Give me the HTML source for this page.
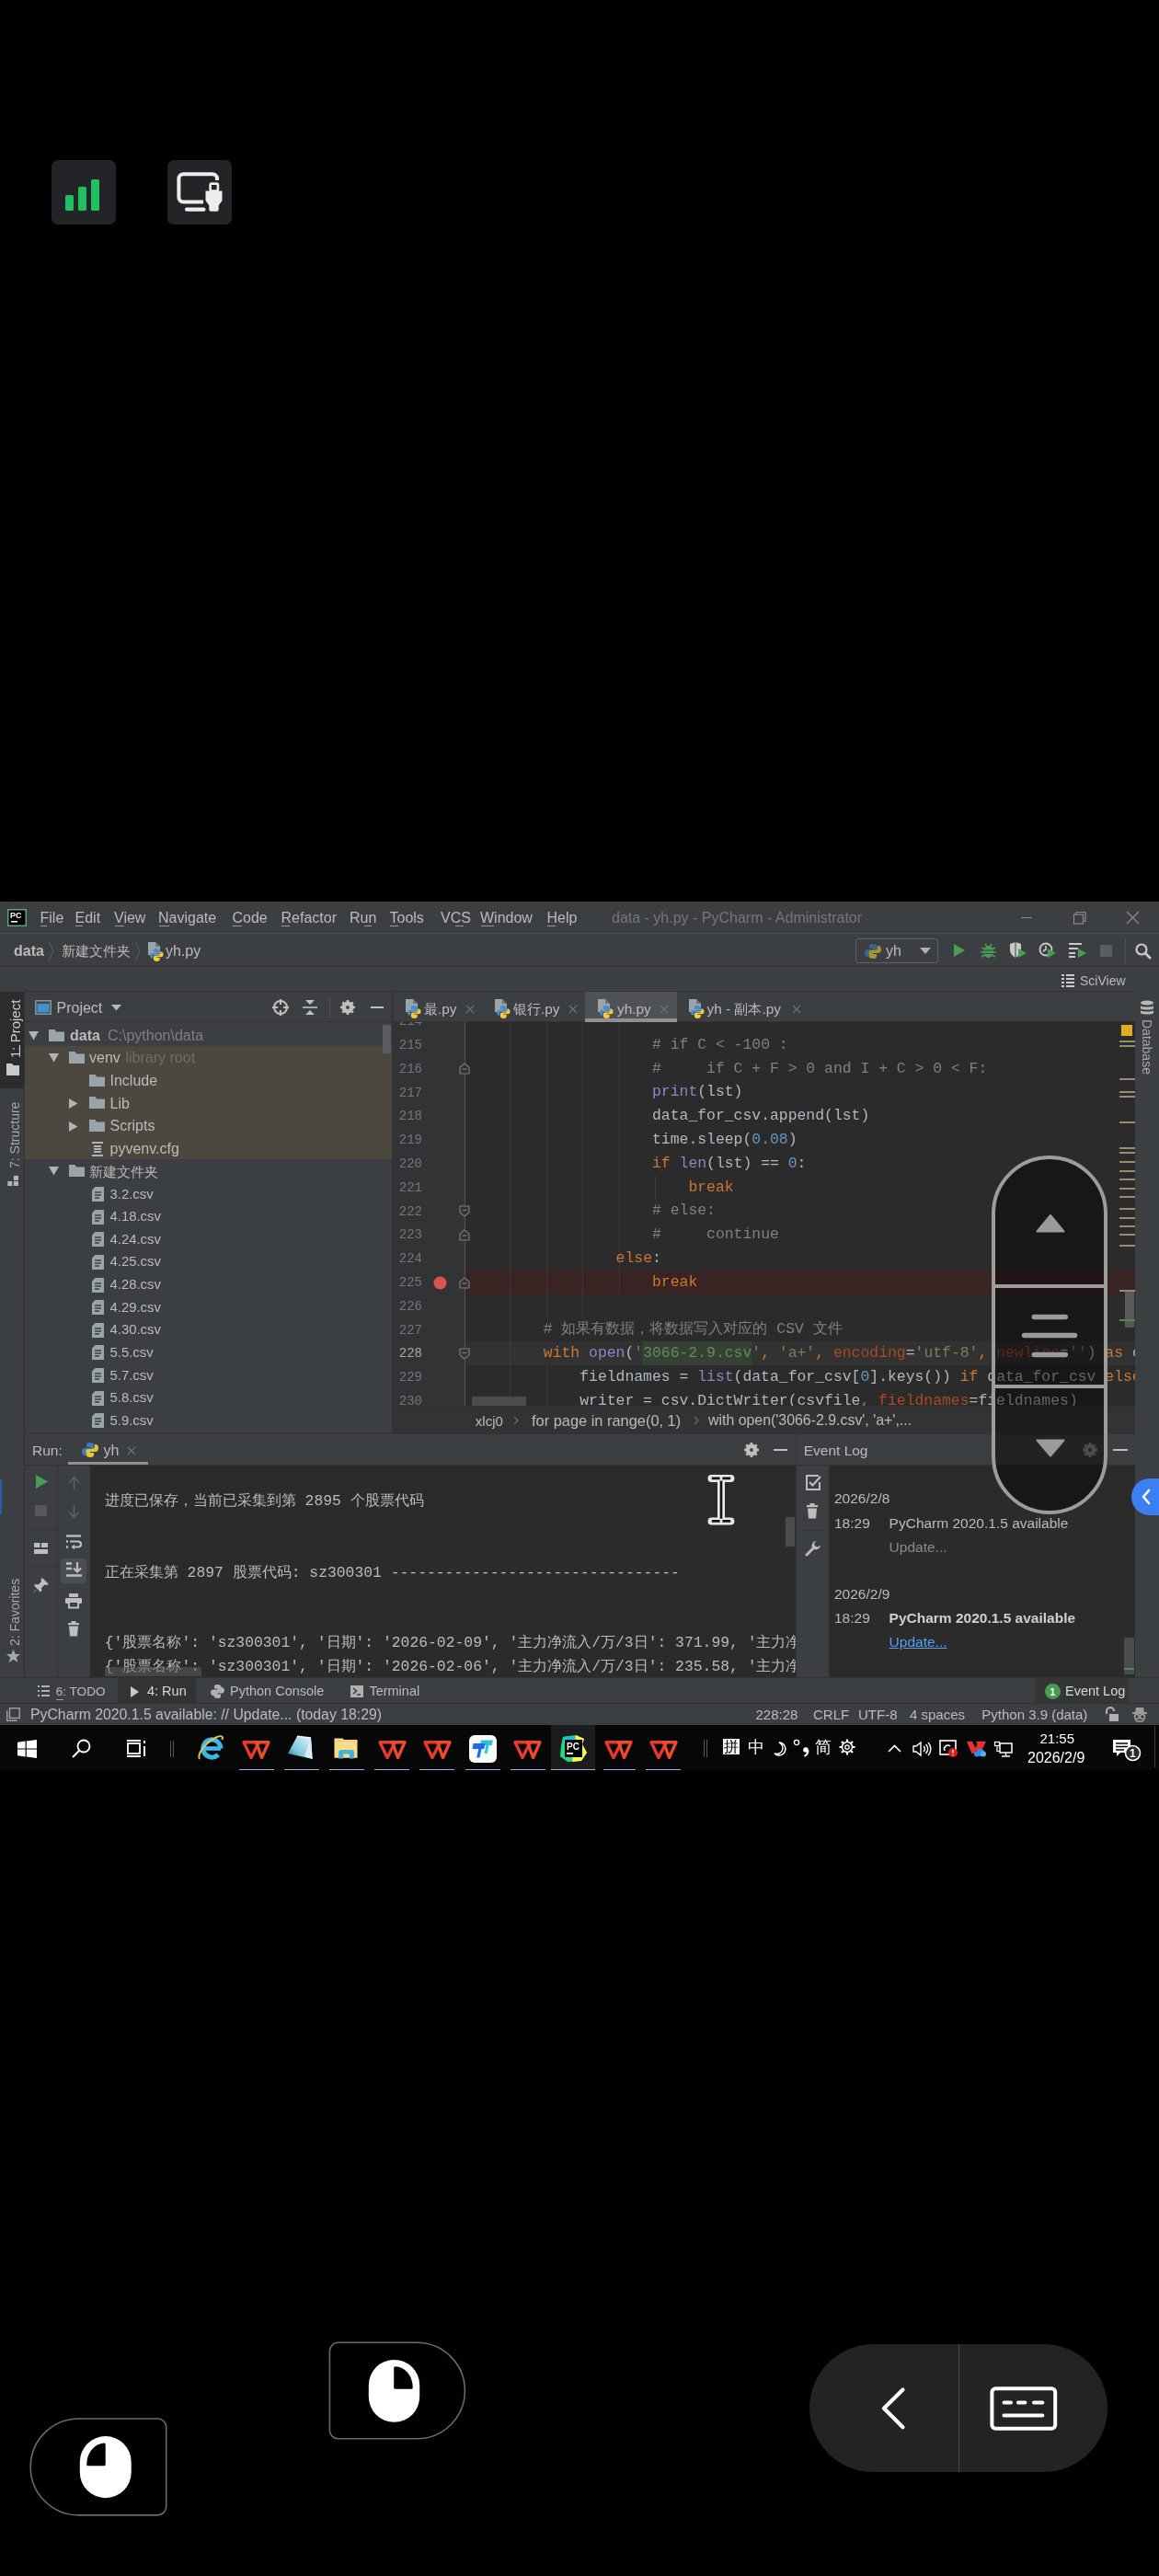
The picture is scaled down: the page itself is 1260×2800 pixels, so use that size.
<!DOCTYPE html>
<html><head><meta charset="utf-8">
<style>
*{margin:0;padding:0;box-sizing:border-box}
html,body{width:1260px;height:2800px;background:#000;overflow:hidden;font-family:"Liberation Sans",sans-serif}
.a{position:absolute}
.t{position:absolute;white-space:pre;line-height:1}
svg.a{overflow:visible}
</style></head><body>

<div class="a" style="left:56px;top:174px;width:70px;height:70px;background:#232427;border-radius:7px"></div>
<div class="a" style="left:71px;top:211.5px;width:8.5px;height:17px;background:#1fbf62;border-radius:1.5px"></div>
<div class="a" style="left:85px;top:203px;width:8.5px;height:25.5px;background:#1fbf62;border-radius:1.5px"></div>
<div class="a" style="left:99px;top:195px;width:8.5px;height:33.5px;background:#1fbf62;border-radius:1.5px"></div>
<div class="a" style="left:182px;top:174px;width:70px;height:70px;background:#232427;border-radius:7px"></div>
<svg class="a" style="left:182px;top:174px;" width="70" height="70" viewBox="0 0 70 70"><path d="M54 22 V20.2 a5 5 0 0 0 -5 -5 H17.4 a5 5 0 0 0 -5 5 V40.5 a5 5 0 0 0 5 5 H39" fill="none" stroke="#ededed" stroke-width="4"/><rect x="19" y="51.5" width="22.5" height="4.3" rx="2" fill="#ededed"/><path d="M41.5 33.6 h18 v10.5 l-3.8 5.2 v4.5 a2 2 0 0 1 -2 2 h-6.4 a2 2 0 0 1 -2 -2 v-4.5 l-3.8 -5.2 z" fill="#ededed" stroke="#232427" stroke-width="3" paint-order="stroke"/><rect x="46.6" y="25.6" width="8.3" height="8" rx="1.5" fill="#232427" stroke="#ededed" stroke-width="2.6"/></svg>
<div class="a" style="left:0;top:980px;width:1260px;height:895px;background:#3c3f41;overflow:hidden;filter:blur(0.3px)">
<div class="a" style="left:0px;top:34px;width:1260px;height:1px;background:#4b4e50;"></div>
<svg class="a" style="left:8px;top:8px;" width="21" height="19" viewBox="0 0 21 19"><rect x="0.75" y="0.75" width="19.5" height="17.5" fill="#000" stroke="#57a584" stroke-width="1.5"/><text x="3" y="10" font-family="Liberation Sans" font-weight="bold" font-size="9" fill="#fff">PC</text><rect x="4" y="13" width="7" height="1.6" fill="#fff"/></svg>
<div class="t" style="left:43.5px;top:10.0px;font-size:16px;color:#bbbbbb;font-weight:normal;font-family:'Liberation Sans',sans-serif;">File</div>
<div class="t" style="left:81.5px;top:10.0px;font-size:16px;color:#bbbbbb;font-weight:normal;font-family:'Liberation Sans',sans-serif;">Edit</div>
<div class="t" style="left:124px;top:10.0px;font-size:16px;color:#bbbbbb;font-weight:normal;font-family:'Liberation Sans',sans-serif;">View</div>
<div class="t" style="left:172px;top:10.0px;font-size:16px;color:#bbbbbb;font-weight:normal;font-family:'Liberation Sans',sans-serif;">Navigate</div>
<div class="t" style="left:252.5px;top:10.0px;font-size:16px;color:#bbbbbb;font-weight:normal;font-family:'Liberation Sans',sans-serif;">Code</div>
<div class="t" style="left:305.5px;top:10.0px;font-size:16px;color:#bbbbbb;font-weight:normal;font-family:'Liberation Sans',sans-serif;">Refactor</div>
<div class="t" style="left:380px;top:10.0px;font-size:16px;color:#bbbbbb;font-weight:normal;font-family:'Liberation Sans',sans-serif;">Run</div>
<div class="t" style="left:423.5px;top:10.0px;font-size:16px;color:#bbbbbb;font-weight:normal;font-family:'Liberation Sans',sans-serif;">Tools</div>
<div class="t" style="left:479px;top:10.0px;font-size:16px;color:#bbbbbb;font-weight:normal;font-family:'Liberation Sans',sans-serif;">VCS</div>
<div class="t" style="left:522px;top:10.0px;font-size:16px;color:#bbbbbb;font-weight:normal;font-family:'Liberation Sans',sans-serif;">Window</div>
<div class="t" style="left:594.5px;top:10.0px;font-size:16px;color:#bbbbbb;font-weight:normal;font-family:'Liberation Sans',sans-serif;">Help</div>
<div class="a" style="left:44px;top:26px;width:7px;height:1px;background:#9a9a9a;"></div>
<div class="a" style="left:82px;top:26px;width:8px;height:1px;background:#9a9a9a;"></div>
<div class="a" style="left:125px;top:26px;width:10px;height:1px;background:#9a9a9a;"></div>
<div class="a" style="left:173px;top:26px;width:11px;height:1px;background:#9a9a9a;"></div>
<div class="a" style="left:253px;top:26px;width:10px;height:1px;background:#9a9a9a;"></div>
<div class="a" style="left:306px;top:26px;width:9px;height:1px;background:#9a9a9a;"></div>
<div class="a" style="left:396px;top:26px;width:8px;height:1px;background:#9a9a9a;"></div>
<div class="a" style="left:424px;top:26px;width:9px;height:1px;background:#9a9a9a;"></div>
<div class="a" style="left:495px;top:26px;width:9px;height:1px;background:#9a9a9a;"></div>
<div class="a" style="left:523px;top:26px;width:14px;height:1px;background:#9a9a9a;"></div>
<div class="a" style="left:595px;top:26px;width:9px;height:1px;background:#9a9a9a;"></div>
<div class="t" style="left:665px;top:9.5px;font-size:16px;color:#777777;font-weight:normal;font-family:'Liberation Sans',sans-serif;">data - yh.py - PyCharm - Administrator</div>
<div class="a" style="left:1110px;top:17px;width:12px;height:1.2px;background:#8a8a8a;"></div>
<svg class="a" style="left:1166px;top:10px;" width="16" height="16" viewBox="0 0 16 16"><rect x="1.5" y="4" width="10" height="10" fill="none" stroke="#8a8a8a" stroke-width="1.2"/><path d="M4 4V1.5h10v10h-2.5" fill="none" stroke="#8a8a8a" stroke-width="1.2"/></svg>
<svg class="a" style="left:1224px;top:10px;" width="15" height="15" viewBox="0 0 15 15"><path d="M1 1L14 14M14 1L1 14" stroke="#8a8a8a" stroke-width="1.3"/></svg>
<div class="a" style="left:0px;top:70px;width:1260px;height:1px;background:#323232;"></div>
<div class="t" style="left:15px;top:45.5px;font-size:16px;color:#bbbbbb;font-weight:bold;font-family:'Liberation Sans',sans-serif;">data</div>
<svg class="a" style="left:52px;top:42px;" width="8" height="24" viewBox="0 0 8 24"><path d="M1 1L6 12L1 23" fill="none" stroke="#5a5d5f" stroke-width="1"/></svg>
<div class="t" style="left:67px;top:46.0px;font-size:15px;color:#bbbbbb;font-weight:normal;font-family:'Liberation Sans',sans-serif;">新建文件夹</div>
<svg class="a" style="left:146px;top:42px;" width="8" height="24" viewBox="0 0 8 24"><path d="M1 1L6 12L1 23" fill="none" stroke="#5a5d5f" stroke-width="1"/></svg>
<svg class="a" style="left:160px;top:44px;" width="18" height="21" viewBox="0 0 18 21"><path d="M1 0h8l5 5v9H1z" fill="#9aa4ab"/><path d="M9 0v5h5" fill="#6b7479"/><path d="M10 7c-3.2 0-3.2 1.6-3.2 2.4v1.6H10v.8H5.3C3.7 11.8 3 13 3 14.5s.7 3 2.3 3h.9v-1.7c0-1.5.8-2.3 2.3-2.3h3.1c1.2 0 2-.8 2-2V9.4C13.6 8 12.2 7 10 7z" fill="#4a8cc7"/><path d="M10.5 21c3.2 0 3.2-1.6 3.2-2.4V17h-3.2v-.8h4.7c1.6 0 2.3-1.2 2.3-2.7s-.7-3-2.3-3h-.9v1.7c0 1.5-.8 2.3-2.3 2.3H8.9c-1.2 0-2 .8-2 2v2.1C6.9 20 8.3 21 10.5 21z" fill="#f0cf3c"/></svg>
<div class="t" style="left:180px;top:45.5px;font-size:16px;color:#bbbbbb;font-weight:normal;font-family:'Liberation Sans',sans-serif;">yh.py</div>
<div class="a" style="left:930px;top:40px;width:90px;height:27px;background:#3c3f41;border:1px solid #5e6060;border-radius:3px"></div>
<svg class="a" style="left:940px;top:45px;" width="18" height="18" viewBox="0 0 18 18"><path d="M9 1c-4 0-4 2-4 3v2h4v1H3c-2 0-3 2-3 4s1 4 3 4h1v-2c0-2 1-3 3-3h4c1.5 0 2.5-1 2.5-2.5V4c0-2-2-3-4.5-3z" fill="#3d6585"/><path d="M9 17c4 0 4-2 4-3v-2H9v-1h6c2 0 3-2 3-4s-1-4-3-4h-1v2c0 2-1 3-3 3H7C5.5 8 4.5 9 4.5 10.5V14c0 2 2 3 4.5 3z" fill="#a8923a"/></svg>
<div class="t" style="left:963px;top:46.0px;font-size:16px;color:#bbbbbb;font-weight:normal;font-family:'Liberation Sans',sans-serif;">yh</div>
<svg class="a" style="left:1000px;top:50px;" width="12" height="8" viewBox="0 0 12 8"><path d="M0 0h12L6 7z" fill="#aeb0b2"/></svg>
<svg class="a" style="left:1036px;top:46px;" width="14" height="14" viewBox="0 0 14 14"><path d="M1 0L13 7L1 14z" fill="#499c54"/></svg>
<svg class="a" style="left:1066px;top:44px;" width="17" height="18" viewBox="0 0 17 18"><ellipse cx="8.5" cy="10.5" rx="5.5" ry="6.5" fill="#499c54"/><path d="M1 6l4 2M16 6l-4 2M0 11h4M17 11h-4M1 16l4-2M16 16l-4-2M5 2l2 3M12 2l-2 3" stroke="#499c54" stroke-width="1.6"/><path d="M3.5 9h10M3.5 12.5h10" stroke="#3c3f41" stroke-width="1"/></svg>
<svg class="a" style="left:1097px;top:44px;" width="20" height="18" viewBox="0 0 20 18"><path d="M1 2l6-2 6 2v6c0 5-3 7-6 9-3-2-6-4-6-9z" fill="#c9c9c9"/><path d="M7 0v17" stroke="#3c3f41" stroke-width="1"/><path d="M10 7l9 5-9 5z" fill="#499c54"/></svg>
<svg class="a" style="left:1129px;top:44px;" width="20" height="18" viewBox="0 0 20 18"><circle cx="8" cy="8" r="6.5" fill="none" stroke="#c9c9c9" stroke-width="1.8"/><path d="M8 4v4l-3 2" fill="none" stroke="#c9c9c9" stroke-width="1.6"/><path d="M10 7l9 5-9 5z" fill="#499c54"/></svg>
<svg class="a" style="left:1162px;top:44px;" width="20" height="18" viewBox="0 0 20 18"><path d="M0 2h14M0 7h10M0 12h7M0 16h7" stroke="#c9c9c9" stroke-width="2"/><path d="M10 7l9 5-9 5z" fill="#499c54"/></svg>
<div class="a" style="left:1196px;top:46.5px;width:13px;height:13px;background:#5b5d5f;"></div>
<div class="a" style="left:1223px;top:40px;width:1px;height:27px;background:#515151;"></div>
<svg class="a" style="left:1234px;top:45px;" width="18" height="18" viewBox="0 0 18 18"><circle cx="7" cy="7" r="5.5" fill="none" stroke="#c9c9c9" stroke-width="2.2"/><path d="M11 11l6 6" stroke="#c9c9c9" stroke-width="2.6"/></svg>
<div class="a" style="left:0px;top:97px;width:1260px;height:1px;background:#323232;"></div>
<svg class="a" style="left:1154px;top:79px;" width="14" height="14" viewBox="0 0 14 14"><path d="M0 1h3M0 5h3M0 9h3M0 13h3M5 1h9M5 5h9M5 9h9M5 13h9" stroke="#c9c9c9" stroke-width="2"/></svg>
<div class="t" style="left:1174px;top:79.0px;font-size:14px;color:#bbbbbb;font-weight:normal;font-family:'Liberation Sans',sans-serif;">SciView</div>
<div class="a" style="left:0px;top:97px;width:26px;height:748px;background:#3c3f41;"></div>
<div class="a" style="left:26px;top:97px;width:1px;height:748px;background:#323232;"></div>
<div class="a" style="left:0px;top:98px;width:26px;height:105px;background:#2b2c2e;"></div>
<div class="t" style="left:15.5px;top:170px;font-size:15px;color:#d0d0d0;transform-origin:0 0;transform:rotate(-90deg) translate(0,-7.5px)">1: Project</div>
<div class="a" style="left:21px;top:156px;width:1px;height:12px;background:#d0d0d0;"></div>
<svg class="a" style="left:7px;top:176px;" width="15" height="13" viewBox="0 0 15 13"><path d="M0 0h6l1.5 2H14v11H0z" fill="#c9c9c9"/></svg>
<div class="t" style="left:15.5px;top:290px;font-size:14px;color:#a8a8a8;transform-origin:0 0;transform:rotate(-90deg) translate(0,-7.0px)">7: Structure</div>
<svg class="a" style="left:6px;top:297px;" width="15" height="13" viewBox="0 0 15 13"><rect x="8.9" y="0.9" width="5" height="5" fill="#b4b6b8"/><rect x="2.3" y="7" width="5" height="5" fill="#b4b6b8"/><rect x="8.9" y="7" width="5" height="5" fill="#b4b6b8"/></svg>
<div class="t" style="left:15.5px;top:809px;font-size:14px;color:#a8a8a8;transform-origin:0 0;transform:rotate(-90deg) translate(0,-7.0px)">2: Favorites</div>
<svg class="a" style="left:7px;top:813px;" width="15" height="15" viewBox="0 0 15 15"><path d="M7.5 0l2.2 5h5.3l-4.3 3.4 1.7 5.6-4.9-3.3-4.9 3.3 1.7-5.6L0 5h5.3z" fill="#a8a8a8"/></svg>
<div class="a" style="left:1234px;top:97px;width:26px;height:748px;background:#3c3f41;"></div>
<div class="a" style="left:1233px;top:97px;width:1px;height:748px;background:#323232;"></div>
<svg class="a" style="left:1239px;top:107px;" width="16" height="18" viewBox="0 0 16 18"><ellipse cx="8" cy="3" rx="7" ry="2.6" fill="#b8b8b8"/><path d="M1 6c0 2 14 2 14 0v3c0 2-14 2-14 0zM1 11c0 2 14 2 14 0v3c0 2-14 2-14 0z" fill="#b8b8b8"/></svg>
<div class="t" style="left:1240px;top:128px;font-size:14px;color:#a8a8a8;transform-origin:0 0;transform:rotate(90deg) translate(0,-14px)">Database</div>
<div class="a" style="left:27px;top:98px;width:399px;height:32px;background:#3c3f41;"></div>
<div class="a" style="left:27px;top:130px;width:399px;height:1px;background:#323232;"></div>
<svg class="a" style="left:38px;top:107px;" width="18" height="16" viewBox="0 0 18 16"><rect x="0.75" y="0.75" width="16.5" height="14.5" fill="#3a4a56" stroke="#8a9399" stroke-width="1.5"/><rect x="2.5" y="4" width="13" height="9.5" fill="#3e94c8"/></svg>
<div class="t" style="left:61.5px;top:107.5px;font-size:16px;color:#bbbbbb;font-weight:normal;font-family:'Liberation Sans',sans-serif;">Project</div>
<svg class="a" style="left:121px;top:112px;" width="11" height="7" viewBox="0 0 11 7"><path d="M0 0h11L5.5 6.5z" fill="#b8b8b8"/></svg>
<svg class="a" style="left:296px;top:106px;" width="18" height="18" viewBox="0 0 18 18"><circle cx="9" cy="9" r="7" fill="none" stroke="#c0c0c0" stroke-width="2"/><path d="M9 0v6M9 12v6M0 9h6M12 9h6" stroke="#c0c0c0" stroke-width="2"/></svg>
<svg class="a" style="left:329px;top:106px;" width="16" height="18" viewBox="0 0 16 18"><path d="M0 9h16" stroke="#c0c0c0" stroke-width="1.6"/><path d="M3 1h10L8 6z M3 17h10L8 12z" fill="#c0c0c0"/></svg>
<div class="a" style="left:357.5px;top:104px;width:1px;height:22px;background:#515151;"></div>
<svg class="a" style="left:370px;top:107px;" width="16" height="16" viewBox="0 0 16 16"><circle cx="8" cy="8" r="4.2" fill="none" stroke="#c0c0c0" stroke-width="4.6"/><path d="M8 0v3M8 13v3M0 8h3M13 8h3M2.3 2.3l2 2M11.7 11.7l2 2M2.3 13.7l2-2M11.7 4.3l2-2" stroke="#c0c0c0" stroke-width="2.6"/></svg>
<div class="a" style="left:403px;top:114px;width:14px;height:2px;background:#c0c0c0;"></div>
<div class="a" style="left:27px;top:131px;width:399px;height:447px;background:#3c3f41;"></div>
<div class="a" style="left:27px;top:157px;width:399px;height:123px;background:#4c483f;"></div>
<div class="a" style="left:415.5px;top:133.5px;width:9px;height:31px;background:#5a5d5f;"></div>
<svg class="a" style="left:31px;top:140.5999999999999px;" width="11" height="10" viewBox="0 0 11 10"><path d="M0 0h11L5.5 9.5z" fill="#aeb3b7"/></svg>
<svg class="a" style="left:53px;top:138.5999999999999px;" width="17" height="13" viewBox="0 0 17 13"><path d="M0 0h6.5l1.5 2.5H17V13H0z" fill="#9aa4ab"/></svg>
<div class="t" style="left:76px;top:137.6px;font-size:16px;color:#bbbbbb;font-weight:bold;font-family:'Liberation Sans',sans-serif;">data</div>
<div class="t" style="left:117px;top:137.6px;font-size:16px;color:#7f7f7f;font-weight:normal;font-family:'Liberation Sans',sans-serif;">C:\python\data</div>
<svg class="a" style="left:53px;top:165.23000000000002px;" width="11" height="10" viewBox="0 0 11 10"><path d="M0 0h11L5.5 9.5z" fill="#aeb3b7"/></svg>
<svg class="a" style="left:75px;top:163.23000000000002px;" width="17" height="13" viewBox="0 0 17 13"><path d="M0 0h6.5l1.5 2.5H17V13H0z" fill="#9aa4ab"/></svg>
<div class="t" style="left:97px;top:162.2px;font-size:16px;color:#bbbbbb;font-weight:normal;font-family:'Liberation Sans',sans-serif;">venv</div>
<div class="t" style="left:136.5px;top:162.2px;font-size:16px;color:#6f6c66;font-weight:normal;font-family:'Liberation Sans',sans-serif;">library root</div>
<svg class="a" style="left:97px;top:187.8599999999999px;" width="17" height="13" viewBox="0 0 17 13"><path d="M0 0h6.5l1.5 2.5H17V13H0z" fill="#9aa4ab"/></svg>
<div class="t" style="left:119.5px;top:186.9px;font-size:16px;color:#bbbbbb;font-weight:normal;font-family:'Liberation Sans',sans-serif;">Include</div>
<svg class="a" style="left:75px;top:213.99px;" width="10" height="11" viewBox="0 0 10 11"><path d="M0 0v11L9.5 5.5z" fill="#aeb3b7"/></svg>
<svg class="a" style="left:97px;top:212.49px;" width="17" height="13" viewBox="0 0 17 13"><path d="M0 0h6.5l1.5 2.5H17V13H0z" fill="#9aa4ab"/></svg>
<div class="t" style="left:119.5px;top:211.5px;font-size:16px;color:#bbbbbb;font-weight:normal;font-family:'Liberation Sans',sans-serif;">Lib</div>
<svg class="a" style="left:75px;top:238.6199999999999px;" width="10" height="11" viewBox="0 0 10 11"><path d="M0 0v11L9.5 5.5z" fill="#aeb3b7"/></svg>
<svg class="a" style="left:97px;top:237.1199999999999px;" width="17" height="13" viewBox="0 0 17 13"><path d="M0 0h6.5l1.5 2.5H17V13H0z" fill="#9aa4ab"/></svg>
<div class="t" style="left:119.5px;top:236.1px;font-size:16px;color:#bbbbbb;font-weight:normal;font-family:'Liberation Sans',sans-serif;">Scripts</div>
<svg class="a" style="left:100px;top:260.75px;" width="12" height="16" viewBox="0 0 12 16"><path d="M0 1h12M2 5h8M2 8h8M2 11h8M0 15h12" stroke="#aeb3b7" stroke-width="2"/></svg>
<div class="t" style="left:119.5px;top:260.8px;font-size:16px;color:#bbbbbb;font-weight:normal;font-family:'Liberation Sans',sans-serif;">pyvenv.cfg</div>
<svg class="a" style="left:53px;top:288.3799999999999px;" width="11" height="10" viewBox="0 0 11 10"><path d="M0 0h11L5.5 9.5z" fill="#aeb3b7"/></svg>
<svg class="a" style="left:75px;top:286.3799999999999px;" width="17" height="13" viewBox="0 0 17 13"><path d="M0 0h6.5l1.5 2.5H17V13H0z" fill="#9aa4ab"/></svg>
<div class="t" style="left:97px;top:285.9px;font-size:15px;color:#bbbbbb;font-weight:normal;font-family:'Liberation Sans',sans-serif;">新建文件夹</div>
<svg class="a" style="left:99.5px;top:310.01px;" width="13" height="16" viewBox="0 0 13 16"><path d="M3.5 0H13v16H0V3.5z" fill="#9aa4ab"/><path d="M3 6h7M3 9h7M3 12h5" stroke="#3c3f41" stroke-width="1.3"/></svg>
<div class="t" style="left:119.5px;top:310.6px;font-size:14.9px;color:#bbbbbb;font-weight:normal;font-family:'Liberation Sans',sans-serif;">3.2.csv</div>
<svg class="a" style="left:99.5px;top:334.6399999999999px;" width="13" height="16" viewBox="0 0 13 16"><path d="M3.5 0H13v16H0V3.5z" fill="#9aa4ab"/><path d="M3 6h7M3 9h7M3 12h5" stroke="#3c3f41" stroke-width="1.3"/></svg>
<div class="t" style="left:119.5px;top:335.2px;font-size:14.9px;color:#bbbbbb;font-weight:normal;font-family:'Liberation Sans',sans-serif;">4.18.csv</div>
<svg class="a" style="left:99.5px;top:359.27px;" width="13" height="16" viewBox="0 0 13 16"><path d="M3.5 0H13v16H0V3.5z" fill="#9aa4ab"/><path d="M3 6h7M3 9h7M3 12h5" stroke="#3c3f41" stroke-width="1.3"/></svg>
<div class="t" style="left:119.5px;top:359.8px;font-size:14.9px;color:#bbbbbb;font-weight:normal;font-family:'Liberation Sans',sans-serif;">4.24.csv</div>
<svg class="a" style="left:99.5px;top:383.89999999999986px;" width="13" height="16" viewBox="0 0 13 16"><path d="M3.5 0H13v16H0V3.5z" fill="#9aa4ab"/><path d="M3 6h7M3 9h7M3 12h5" stroke="#3c3f41" stroke-width="1.3"/></svg>
<div class="t" style="left:119.5px;top:384.4px;font-size:14.9px;color:#bbbbbb;font-weight:normal;font-family:'Liberation Sans',sans-serif;">4.25.csv</div>
<svg class="a" style="left:99.5px;top:408.53px;" width="13" height="16" viewBox="0 0 13 16"><path d="M3.5 0H13v16H0V3.5z" fill="#9aa4ab"/><path d="M3 6h7M3 9h7M3 12h5" stroke="#3c3f41" stroke-width="1.3"/></svg>
<div class="t" style="left:119.5px;top:409.1px;font-size:14.9px;color:#bbbbbb;font-weight:normal;font-family:'Liberation Sans',sans-serif;">4.28.csv</div>
<svg class="a" style="left:99.5px;top:433.15999999999985px;" width="13" height="16" viewBox="0 0 13 16"><path d="M3.5 0H13v16H0V3.5z" fill="#9aa4ab"/><path d="M3 6h7M3 9h7M3 12h5" stroke="#3c3f41" stroke-width="1.3"/></svg>
<div class="t" style="left:119.5px;top:433.7px;font-size:14.9px;color:#bbbbbb;font-weight:normal;font-family:'Liberation Sans',sans-serif;">4.29.csv</div>
<svg class="a" style="left:99.5px;top:457.78999999999996px;" width="13" height="16" viewBox="0 0 13 16"><path d="M3.5 0H13v16H0V3.5z" fill="#9aa4ab"/><path d="M3 6h7M3 9h7M3 12h5" stroke="#3c3f41" stroke-width="1.3"/></svg>
<div class="t" style="left:119.5px;top:458.3px;font-size:14.9px;color:#bbbbbb;font-weight:normal;font-family:'Liberation Sans',sans-serif;">4.30.csv</div>
<svg class="a" style="left:99.5px;top:482.41999999999985px;" width="13" height="16" viewBox="0 0 13 16"><path d="M3.5 0H13v16H0V3.5z" fill="#9aa4ab"/><path d="M3 6h7M3 9h7M3 12h5" stroke="#3c3f41" stroke-width="1.3"/></svg>
<div class="t" style="left:119.5px;top:483.0px;font-size:14.9px;color:#bbbbbb;font-weight:normal;font-family:'Liberation Sans',sans-serif;">5.5.csv</div>
<svg class="a" style="left:99.5px;top:507.04999999999995px;" width="13" height="16" viewBox="0 0 13 16"><path d="M3.5 0H13v16H0V3.5z" fill="#9aa4ab"/><path d="M3 6h7M3 9h7M3 12h5" stroke="#3c3f41" stroke-width="1.3"/></svg>
<div class="t" style="left:119.5px;top:507.6px;font-size:14.9px;color:#bbbbbb;font-weight:normal;font-family:'Liberation Sans',sans-serif;">5.7.csv</div>
<svg class="a" style="left:99.5px;top:531.6799999999998px;" width="13" height="16" viewBox="0 0 13 16"><path d="M3.5 0H13v16H0V3.5z" fill="#9aa4ab"/><path d="M3 6h7M3 9h7M3 12h5" stroke="#3c3f41" stroke-width="1.3"/></svg>
<div class="t" style="left:119.5px;top:532.2px;font-size:14.9px;color:#bbbbbb;font-weight:normal;font-family:'Liberation Sans',sans-serif;">5.8.csv</div>
<svg class="a" style="left:99.5px;top:556.31px;" width="13" height="16" viewBox="0 0 13 16"><path d="M3.5 0H13v16H0V3.5z" fill="#9aa4ab"/><path d="M3 6h7M3 9h7M3 12h5" stroke="#3c3f41" stroke-width="1.3"/></svg>
<div class="t" style="left:119.5px;top:556.9px;font-size:14.9px;color:#bbbbbb;font-weight:normal;font-family:'Liberation Sans',sans-serif;">5.9.csv</div>
<div class="a" style="left:27px;top:577px;width:399px;height:1px;background:#323232;"></div>
<div class="a" style="left:426px;top:98px;width:808px;height:33px;background:#3c3f41;"></div>
<div class="a" style="left:426px;top:130px;width:808px;height:1px;background:#323232;"></div>
<div class="a" style="left:635.5px;top:98px;width:100.5px;height:33px;background:#4e5254;"></div>
<div class="a" style="left:635.5px;top:127px;width:100.5px;height:4px;background:#8d9194;"></div>
<svg class="a" style="left:440px;top:106px;" width="18" height="21" viewBox="0 0 18 21"><path d="M1 0h8l5 5v9H1z" fill="#9aa4ab"/><path d="M9 0v5h5" fill="#6b7479"/><path d="M10 7c-3.2 0-3.2 1.6-3.2 2.4v1.6H10v.8H5.3C3.7 11.8 3 13 3 14.5s.7 3 2.3 3h.9v-1.7c0-1.5.8-2.3 2.3-2.3h3.1c1.2 0 2-.8 2-2V9.4C13.6 8 12.2 7 10 7z" fill="#4a8cc7"/><path d="M10.5 21c3.2 0 3.2-1.6 3.2-2.4V17h-3.2v-.8h4.7c1.6 0 2.3-1.2 2.3-2.7s-.7-3-2.3-3h-.9v1.7c0 1.5-.8 2.3-2.3 2.3H8.9c-1.2 0-2 .8-2 2v2.1C6.9 20 8.3 21 10.5 21z" fill="#f0cf3c"/></svg>
<div class="t" style="left:461px;top:108.8px;font-size:15.4px;color:#bbbbbb;font-weight:normal;font-family:'Liberation Sans',sans-serif;">最.py</div>
<svg class="a" style="left:506px;top:112px;" width="10" height="10" viewBox="0 0 10 10"><path d="M1 1L9 9M9 1L1 9" stroke="#6e7072" stroke-width="1.2"/></svg>
<svg class="a" style="left:537px;top:106px;" width="18" height="21" viewBox="0 0 18 21"><path d="M1 0h8l5 5v9H1z" fill="#9aa4ab"/><path d="M9 0v5h5" fill="#6b7479"/><path d="M10 7c-3.2 0-3.2 1.6-3.2 2.4v1.6H10v.8H5.3C3.7 11.8 3 13 3 14.5s.7 3 2.3 3h.9v-1.7c0-1.5.8-2.3 2.3-2.3h3.1c1.2 0 2-.8 2-2V9.4C13.6 8 12.2 7 10 7z" fill="#4a8cc7"/><path d="M10.5 21c3.2 0 3.2-1.6 3.2-2.4V17h-3.2v-.8h4.7c1.6 0 2.3-1.2 2.3-2.7s-.7-3-2.3-3h-.9v1.7c0 1.5-.8 2.3-2.3 2.3H8.9c-1.2 0-2 .8-2 2v2.1C6.9 20 8.3 21 10.5 21z" fill="#f0cf3c"/></svg>
<div class="t" style="left:558px;top:108.8px;font-size:15.4px;color:#bbbbbb;font-weight:normal;font-family:'Liberation Sans',sans-serif;">银行.py</div>
<svg class="a" style="left:617.5px;top:112px;" width="10" height="10" viewBox="0 0 10 10"><path d="M1 1L9 9M9 1L1 9" stroke="#6e7072" stroke-width="1.2"/></svg>
<svg class="a" style="left:649px;top:106px;" width="18" height="21" viewBox="0 0 18 21"><path d="M1 0h8l5 5v9H1z" fill="#9aa4ab"/><path d="M9 0v5h5" fill="#6b7479"/><path d="M10 7c-3.2 0-3.2 1.6-3.2 2.4v1.6H10v.8H5.3C3.7 11.8 3 13 3 14.5s.7 3 2.3 3h.9v-1.7c0-1.5.8-2.3 2.3-2.3h3.1c1.2 0 2-.8 2-2V9.4C13.6 8 12.2 7 10 7z" fill="#4a8cc7"/><path d="M10.5 21c3.2 0 3.2-1.6 3.2-2.4V17h-3.2v-.8h4.7c1.6 0 2.3-1.2 2.3-2.7s-.7-3-2.3-3h-.9v1.7c0 1.5-.8 2.3-2.3 2.3H8.9c-1.2 0-2 .8-2 2v2.1C6.9 20 8.3 21 10.5 21z" fill="#f0cf3c"/></svg>
<div class="t" style="left:671px;top:108.8px;font-size:15.4px;color:#bbbbbb;font-weight:normal;font-family:'Liberation Sans',sans-serif;">yh.py</div>
<svg class="a" style="left:716.5px;top:112px;" width="10" height="10" viewBox="0 0 10 10"><path d="M1 1L9 9M9 1L1 9" stroke="#6e7072" stroke-width="1.2"/></svg>
<svg class="a" style="left:748px;top:106px;" width="18" height="21" viewBox="0 0 18 21"><path d="M1 0h8l5 5v9H1z" fill="#9aa4ab"/><path d="M9 0v5h5" fill="#6b7479"/><path d="M10 7c-3.2 0-3.2 1.6-3.2 2.4v1.6H10v.8H5.3C3.7 11.8 3 13 3 14.5s.7 3 2.3 3h.9v-1.7c0-1.5.8-2.3 2.3-2.3h3.1c1.2 0 2-.8 2-2V9.4C13.6 8 12.2 7 10 7z" fill="#4a8cc7"/><path d="M10.5 21c3.2 0 3.2-1.6 3.2-2.4V17h-3.2v-.8h4.7c1.6 0 2.3-1.2 2.3-2.7s-.7-3-2.3-3h-.9v1.7c0 1.5-.8 2.3-2.3 2.3H8.9c-1.2 0-2 .8-2 2v2.1C6.9 20 8.3 21 10.5 21z" fill="#f0cf3c"/></svg>
<div class="t" style="left:768.5px;top:108.8px;font-size:15.4px;color:#bbbbbb;font-weight:normal;font-family:'Liberation Sans',sans-serif;">yh - 副本.py</div>
<svg class="a" style="left:861px;top:112px;" width="10" height="10" viewBox="0 0 10 10"><path d="M1 1L9 9M9 1L1 9" stroke="#6e7072" stroke-width="1.2"/></svg>
<div class="a" style="left:425.5px;top:98px;width:1.2px;height:480px;background:#2b2b2b;"></div>
<div class="a" style="left:426px;top:131px;width:808px;height:417.5px;background:#2b2b2b;overflow:hidden">
<div class="a" style="left:0px;top:0px;width:79.5px;height:417.5px;background:#313335;"></div>
<div class="a" style="left:79px;top:0px;width:1px;height:417.5px;background:#555555;"></div>
<div class="a" style="left:80px;top:347.4000000000001px;width:728px;height:26px;background:#323232;"></div>
<div class="a" style="left:80px;top:270.0px;width:728px;height:26px;background:#3a2323;"></div>
<div class="a" style="left:272.4px;top:347.4000000000001px;width:118.5px;height:26px;background:#344134;"></div>
<div class="a" style="left:128px;top:0px;width:1px;height:425.0px;background:#393939;"></div>
<div class="a" style="left:168px;top:0px;width:1px;height:321.79999999999995px;background:#393939;"></div>
<div class="a" style="left:207px;top:0px;width:1px;height:321.79999999999995px;background:#393939;"></div>
<div class="a" style="left:247px;top:0px;width:1px;height:296.0px;background:#393939;"></div>
<div class="a" style="left:286px;top:166.79999999999995px;width:1px;height:26px;background:#393939;"></div>
<div class="a" style="left:168px;top:373.20000000000005px;width:1px;height:44.299999999999955px;background:#393939;"></div>
<div class="t" style="left:7.800000000000011px;top:-7.8px;font-size:14px;color:#74777a;font-weight:normal;font-family:'Liberation Mono',monospace;">214</div>
<div class="t" style="left:7.800000000000011px;top:18.0px;font-size:14px;color:#74777a;font-weight:normal;font-family:'Liberation Mono',monospace;">215</div>
<div class="t" style="left:7.800000000000011px;top:43.8px;font-size:14px;color:#74777a;font-weight:normal;font-family:'Liberation Mono',monospace;">216</div>
<div class="t" style="left:7.800000000000011px;top:69.6px;font-size:14px;color:#74777a;font-weight:normal;font-family:'Liberation Mono',monospace;">217</div>
<div class="t" style="left:7.800000000000011px;top:95.4px;font-size:14px;color:#74777a;font-weight:normal;font-family:'Liberation Mono',monospace;">218</div>
<div class="t" style="left:7.800000000000011px;top:121.2px;font-size:14px;color:#74777a;font-weight:normal;font-family:'Liberation Mono',monospace;">219</div>
<div class="t" style="left:7.800000000000011px;top:147.0px;font-size:14px;color:#74777a;font-weight:normal;font-family:'Liberation Mono',monospace;">220</div>
<div class="t" style="left:7.800000000000011px;top:172.8px;font-size:14px;color:#74777a;font-weight:normal;font-family:'Liberation Mono',monospace;">221</div>
<div class="t" style="left:7.800000000000011px;top:198.6px;font-size:14px;color:#74777a;font-weight:normal;font-family:'Liberation Mono',monospace;">222</div>
<div class="t" style="left:7.800000000000011px;top:224.4px;font-size:14px;color:#74777a;font-weight:normal;font-family:'Liberation Mono',monospace;">223</div>
<div class="t" style="left:7.800000000000011px;top:250.2px;font-size:14px;color:#74777a;font-weight:normal;font-family:'Liberation Mono',monospace;">224</div>
<div class="t" style="left:7.800000000000011px;top:276.0px;font-size:14px;color:#74777a;font-weight:normal;font-family:'Liberation Mono',monospace;">225</div>
<div class="t" style="left:7.800000000000011px;top:301.8px;font-size:14px;color:#74777a;font-weight:normal;font-family:'Liberation Mono',monospace;">226</div>
<div class="t" style="left:7.800000000000011px;top:327.6px;font-size:14px;color:#74777a;font-weight:normal;font-family:'Liberation Mono',monospace;">227</div>
<div class="t" style="left:7.800000000000011px;top:353.4px;font-size:14px;color:#a8a8a8;font-weight:normal;font-family:'Liberation Mono',monospace;">228</div>
<div class="t" style="left:7.800000000000011px;top:379.2px;font-size:14px;color:#74777a;font-weight:normal;font-family:'Liberation Mono',monospace;">229</div>
<div class="t" style="left:7.800000000000011px;top:405.0px;font-size:14px;color:#74777a;font-weight:normal;font-family:'Liberation Mono',monospace;">230</div>
<svg class="a" style="left:73px;top:44.299999999999955px;" width="12" height="13" viewBox="0 0 12 13"><path d="M1 12h10V5L6 1 1 5z" fill="#313335" stroke="#7a7a7a" stroke-width="1.2"/><path d="M3.5 7h5" stroke="#7a7a7a" stroke-width="1.2"/></svg>
<svg class="a" style="left:73px;top:199.0999999999999px;" width="12" height="13" viewBox="0 0 12 13"><path d="M1 1h10v7l-5 4-5-4z" fill="#313335" stroke="#7a7a7a" stroke-width="1.2"/><path d="M3.5 5.5h5" stroke="#7a7a7a" stroke-width="1.2"/></svg>
<svg class="a" style="left:73px;top:224.9000000000001px;" width="12" height="13" viewBox="0 0 12 13"><path d="M1 12h10V5L6 1 1 5z" fill="#313335" stroke="#7a7a7a" stroke-width="1.2"/><path d="M3.5 7h5" stroke="#7a7a7a" stroke-width="1.2"/></svg>
<svg class="a" style="left:73px;top:276.5px;" width="12" height="13" viewBox="0 0 12 13"><path d="M1 12h10V5L6 1 1 5z" fill="#313335" stroke="#7a7a7a" stroke-width="1.2"/><path d="M3.5 7h5" stroke="#7a7a7a" stroke-width="1.2"/></svg>
<svg class="a" style="left:73px;top:353.9000000000001px;" width="12" height="13" viewBox="0 0 12 13"><path d="M1 1h10v7l-5 4-5-4z" fill="#313335" stroke="#7a7a7a" stroke-width="1.2"/><path d="M3.5 5.5h5" stroke="#7a7a7a" stroke-width="1.2"/></svg>
<svg class="a" style="left:45px;top:275.5px;" width="15" height="15" viewBox="0 0 15 15"><circle cx="7.5" cy="7.5" r="7" fill="#d9534f"/></svg>
<div class="t" style="left:283.0px;top:16.8px;font-size:16.42px;font-family:'Liberation Mono',monospace"><span style="color:#808080"># if C &lt; -100 :</span></div>
<div class="t" style="left:283.0px;top:42.6px;font-size:16.42px;font-family:'Liberation Mono',monospace"><span style="color:#808080">#     if C + F &gt; 0 and I + C &gt; 0 &lt; F:</span></div>
<div class="t" style="left:283.0px;top:68.4px;font-size:16.42px;font-family:'Liberation Mono',monospace"><span style="color:#8888c6">print</span><span style="color:#b0b8c0">(lst)</span></div>
<div class="t" style="left:283.0px;top:94.2px;font-size:16.42px;font-family:'Liberation Mono',monospace"><span style="color:#b0b8c0">data_for_csv.append(lst)</span></div>
<div class="t" style="left:283.0px;top:120.0px;font-size:16.42px;font-family:'Liberation Mono',monospace"><span style="color:#b0b8c0">time.sleep(</span><span style="color:#6897bb">0.08</span><span style="color:#b0b8c0">)</span></div>
<div class="t" style="left:283.0px;top:145.8px;font-size:16.42px;font-family:'Liberation Mono',monospace"><span style="color:#cc7832">if </span><span style="color:#8888c6">len</span><span style="color:#b0b8c0">(lst) == </span><span style="color:#6897bb">0</span><span style="color:#b0b8c0">:</span></div>
<div class="t" style="left:322.4px;top:171.6px;font-size:16.42px;font-family:'Liberation Mono',monospace"><span style="color:#cc7832">break</span></div>
<div class="t" style="left:283.0px;top:197.4px;font-size:16.42px;font-family:'Liberation Mono',monospace"><span style="color:#808080"># else:</span></div>
<div class="t" style="left:283.0px;top:223.2px;font-size:16.42px;font-family:'Liberation Mono',monospace"><span style="color:#808080">#     continue</span></div>
<div class="t" style="left:243.6px;top:249.0px;font-size:16.42px;font-family:'Liberation Mono',monospace"><span style="color:#cc7832">else</span><span style="color:#b0b8c0">:</span></div>
<div class="t" style="left:283.0px;top:274.8px;font-size:16.42px;font-family:'Liberation Mono',monospace"><span style="color:#cc7832">break</span></div>
<div class="t" style="left:164.8px;top:326.4px;font-size:16.42px;font-family:'Liberation Mono',monospace"><span style="color:#808080"># 如果有数据，将数据写入对应的 CSV 文件</span></div>
<div class="t" style="left:164.8px;top:352.2px;font-size:16.42px;font-family:'Liberation Mono',monospace"><span style="color:#cc7832">with </span><span style="color:#8888c6">open</span><span style="color:#b0b8c0">(</span><span style="color:#6a8759">&#x27;3066-2.9.csv&#x27;</span><span style="color:#cc7832">, </span><span style="color:#6a8759">&#x27;a+&#x27;</span><span style="color:#cc7832">, </span><span style="color:#aa4926">encoding</span><span style="color:#b0b8c0">=</span><span style="color:#6a8759">&#x27;utf-8&#x27;</span><span style="color:#cc7832">, </span><span style="color:#aa4926">newline</span><span style="color:#b0b8c0">=</span><span style="color:#6a8759">&#x27;&#x27;</span><span style="color:#b0b8c0">) </span><span style="color:#cc7832">as </span><span style="color:#b0b8c0">csvfile:</span></div>
<div class="t" style="left:204.2px;top:378.0px;font-size:16.42px;font-family:'Liberation Mono',monospace"><span style="color:#b0b8c0">fieldnames = </span><span style="color:#8888c6">list</span><span style="color:#b0b8c0">(data_for_csv[</span><span style="color:#6897bb">0</span><span style="color:#b0b8c0">].keys()) </span><span style="color:#cc7832">if </span><span style="color:#b0b8c0">data_for_csv </span><span style="color:#cc7832">else </span><span style="color:#b0b8c0">[]</span></div>
<div class="t" style="left:204.2px;top:403.8px;font-size:16.42px;font-family:'Liberation Mono',monospace"><span style="color:#b0b8c0">writer = csv.DictWriter(csvfile</span><span style="color:#cc7832">, </span><span style="color:#aa4926">fieldnames</span><span style="color:#b0b8c0">=fieldnames)</span></div>
<div class="a" style="left:87px;top:407px;width:59px;height:9.5px;background:#4a4b4d;"></div>
<div class="a" style="left:793.3px;top:3.400000000000091px;width:12px;height:12px;background:#e0ad1d;"></div>
<div class="a" style="left:791px;top:20px;width:16.5px;height:2px;background:#978b70;"></div>
<div class="a" style="left:791px;top:25px;width:16.5px;height:2px;background:#978b70;"></div>
<div class="a" style="left:791px;top:61px;width:16.5px;height:2px;background:#978b70;"></div>
<div class="a" style="left:791px;top:75px;width:16.5px;height:2px;background:#978b70;"></div>
<div class="a" style="left:791px;top:80px;width:16.5px;height:2px;background:#978b70;"></div>
<div class="a" style="left:791px;top:108px;width:16.5px;height:2px;background:#978b70;"></div>
<div class="a" style="left:791px;top:136px;width:16.5px;height:2px;background:#978b70;"></div>
<div class="a" style="left:791px;top:141px;width:16.5px;height:2px;background:#978b70;"></div>
<div class="a" style="left:791px;top:151px;width:16.5px;height:2px;background:#978b70;"></div>
<div class="a" style="left:791px;top:161px;width:16.5px;height:2px;background:#978b70;"></div>
<div class="a" style="left:791px;top:170px;width:16.5px;height:2px;background:#978b70;"></div>
<div class="a" style="left:791px;top:180px;width:16.5px;height:2px;background:#978b70;"></div>
<div class="a" style="left:791px;top:189px;width:16.5px;height:2px;background:#978b70;"></div>
<div class="a" style="left:791px;top:202px;width:16.5px;height:2px;background:#978b70;"></div>
<div class="a" style="left:791px;top:212px;width:16.5px;height:2px;background:#978b70;"></div>
<div class="a" style="left:791px;top:221px;width:16.5px;height:2px;background:#978b70;"></div>
<div class="a" style="left:791px;top:230px;width:16.5px;height:2px;background:#978b70;"></div>
<div class="a" style="left:791px;top:242px;width:16.5px;height:2px;background:#978b70;"></div>
<div class="a" style="left:796.5px;top:291.29999999999995px;width:10.5px;height:41px;background:#5a5a5c;"></div>
<div class="a" style="left:791px;top:291.29999999999995px;width:16.5px;height:2px;background:#8e8a82;"></div>
<div class="a" style="left:791px;top:322.5px;width:16.5px;height:2px;background:#4f8a4a;"></div>
</div>
<div class="a" style="left:426px;top:548.5px;width:808px;height:30.5px;background:#313335;"></div>
<div class="a" style="left:426px;top:548px;width:808px;height:1px;background:#2f2f2f;"></div>
<div class="t" style="left:516.8px;top:556.5px;font-size:15px;color:#bbbbbb;font-weight:normal;font-family:'Liberation Sans',sans-serif;">xlcj0</div>
<svg class="a" style="left:558px;top:559px;" width="6" height="10" viewBox="0 0 6 10"><path d="M1 1l4 4-4 4" fill="none" stroke="#6e6e6e" stroke-width="1.1"/></svg>
<div class="t" style="left:578px;top:555.8px;font-size:16.4px;color:#bbbbbb;font-weight:normal;font-family:'Liberation Sans',sans-serif;">for page in range(0, 1)</div>
<svg class="a" style="left:754px;top:559px;" width="6" height="10" viewBox="0 0 6 10"><path d="M1 1l4 4-4 4" fill="none" stroke="#6e6e6e" stroke-width="1.1"/></svg>
<div class="t" style="left:770px;top:556.0px;font-size:15.9px;color:#bbbbbb;font-weight:normal;font-family:'Liberation Sans',sans-serif;">with open('3066-2.9.csv', 'a+',...</div>
<div class="a" style="left:27px;top:579px;width:1207px;height:32.5px;background:#3c3f41;"></div>
<div class="a" style="left:27px;top:611.5px;width:1207px;height:1px;background:#323232;"></div>
<div class="t" style="left:35px;top:588.8px;font-size:15.5px;color:#bbbbbb;font-weight:normal;font-family:'Liberation Sans',sans-serif;">Run:</div>
<svg class="a" style="left:89px;top:587px;" width="18" height="18" viewBox="0 0 18 18"><path d="M9 1c-4 0-4 2-4 3v2h4v1H3c-2 0-3 2-3 4s1 4 3 4h1v-2c0-2 1-3 3-3h4c1.5 0 2.5-1 2.5-2.5V4c0-2-2-3-4.5-3z" fill="#3e7ab8"/><path d="M9 17c4 0 4-2 4-3v-2H9v-1h6c2 0 3-2 3-4s-1-4-3-4h-1v2c0 2-1 3-3 3H7C5.5 8 4.5 9 4.5 10.5V14c0 2 2 3 4.5 3z" fill="#e5c437"/></svg>
<div class="t" style="left:112.5px;top:589.0px;font-size:16px;color:#bbbbbb;font-weight:normal;font-family:'Liberation Sans',sans-serif;">yh</div>
<svg class="a" style="left:138px;top:592px;" width="10" height="10" viewBox="0 0 10 10"><path d="M1 1L9 9M9 1L1 9" stroke="#6e7072" stroke-width="1.2"/></svg>
<div class="a" style="left:74px;top:608.5px;width:87px;height:3.5px;background:#8d9194;"></div>
<svg class="a" style="left:809px;top:588px;" width="16" height="16" viewBox="0 0 16 16"><circle cx="8" cy="8" r="4.2" fill="none" stroke="#c0c0c0" stroke-width="4.6"/><path d="M8 0v3M8 13v3M0 8h3M13 8h3M2.3 2.3l2 2M11.7 11.7l2 2M2.3 13.7l2-2M11.7 4.3l2-2" stroke="#c0c0c0" stroke-width="2.6"/></svg>
<div class="a" style="left:841px;top:595px;width:15px;height:2px;background:#c0c0c0;"></div>
<div class="a" style="left:865px;top:579px;width:1px;height:33px;background:#323232;"></div>
<div class="t" style="left:873.7px;top:588.8px;font-size:15.5px;color:#bbbbbb;font-weight:normal;font-family:'Liberation Sans',sans-serif;">Event Log</div>
<svg class="a" style="left:1177px;top:588px;" width="16" height="16" viewBox="0 0 16 16"><circle cx="8" cy="8" r="4.2" fill="none" stroke="#8a8a8a" stroke-width="4.6"/><path d="M8 0v3M8 13v3M0 8h3M13 8h3M2.3 2.3l2 2M11.7 11.7l2 2M2.3 13.7l2-2M11.7 4.3l2-2" stroke="#8a8a8a" stroke-width="2.6"/></svg>
<div class="a" style="left:1210px;top:595px;width:16px;height:2px;background:#c0c0c0;"></div>
<div class="a" style="left:27px;top:612.5px;width:35px;height:230px;background:#3c3f41;"></div>
<div class="a" style="left:62px;top:612.5px;width:1px;height:230px;background:#323232;"></div>
<div class="a" style="left:63px;top:612.5px;width:34.5px;height:230px;background:#3c3f41;"></div>
<svg class="a" style="left:39px;top:622.5px;" width="13" height="15" viewBox="0 0 13 15"><path d="M0 0L13 7.5L0 15z" fill="#499c54"/></svg>
<div class="a" style="left:38.3px;top:655.7px;width:12.5px;height:12.5px;background:#555759;"></div>
<div class="a" style="left:34px;top:682px;width:27px;height:1px;background:#323232;"></div>
<svg class="a" style="left:37px;top:696.5px;" width="15" height="12" viewBox="0 0 15 12"><rect x="0" y="0" width="6.5" height="5" fill="#bdbdbd"/><rect x="8" y="0" width="7" height="5" fill="#bdbdbd"/><rect x="0" y="7" width="15" height="5" fill="#bdbdbd"/></svg>
<div class="a" style="left:34px;top:722.4000000000001px;width:27px;height:1px;background:#323232;"></div>
<svg class="a" style="left:35.5px;top:734px;" width="18" height="18" viewBox="0 0 18 18"><path d="M10 1l7 7-2 1-2.5-.5L9 12l.5 3-1.5 1.5-3.5-3.5L1 17l-.5-.5 4-3.5L1 9.5 2.5 8l3 .5 3.5-3.5L8.5 2.5z" fill="#bdbdbd"/></svg>
<svg class="a" style="left:73.5px;top:624.5px;" width="13" height="14" viewBox="0 0 13 14"><path d="M6.5 1v13M1 6.5l5.5-5.5 5.5 5.5" fill="none" stroke="#5d6062" stroke-width="1.6"/></svg>
<svg class="a" style="left:73.5px;top:656px;" width="13" height="14" viewBox="0 0 13 14"><path d="M6.5 0v13M1 7.5l5.5 5.5 5.5-5.5" fill="none" stroke="#5d6062" stroke-width="1.6"/></svg>
<svg class="a" style="left:72px;top:687.5px;" width="17" height="17" viewBox="0 0 17 17"><path d="M0 1.5h16" stroke="#bdbdbd" stroke-width="2.4"/><path d="M4 7.5h9a3 3 0 0 1 0 6H8" fill="none" stroke="#bdbdbd" stroke-width="2.2"/><path d="M9 10.5l-3.5 3 3.5 3z" fill="#bdbdbd"/><path d="M0 7.5h2M0 13.5h2" stroke="#bdbdbd" stroke-width="2.4"/></svg>
<div class="a" style="left:66.3px;top:713.7px;width:27.3px;height:27px;background:#4b4e50;border-radius:3px"></div>
<svg class="a" style="left:72px;top:717.5px;" width="17" height="16" viewBox="0 0 17 16"><path d="M0 1.5h6M0 7h6M0 14.5h17" stroke="#bdbdbd" stroke-width="2.4"/><path d="M12 0v10M8 6.5l4 4 4-4" fill="none" stroke="#bdbdbd" stroke-width="2.2"/></svg>
<svg class="a" style="left:71px;top:752px;" width="18" height="16" viewBox="0 0 18 16"><rect x="4" y="0" width="10" height="4" fill="#bdbdbd"/><rect x="0" y="5" width="18" height="6" rx="1" fill="#bdbdbd"/><rect x="4" y="9" width="10" height="6.5" fill="#3c3f41" stroke="#bdbdbd" stroke-width="2"/></svg>
<svg class="a" style="left:74px;top:782px;" width="12" height="17" viewBox="0 0 12 17"><rect x="0" y="2" width="12" height="2.2" fill="#bdbdbd"/><rect x="3.5" y="0" width="5" height="2" fill="#bdbdbd"/><path d="M1 5.5h10l-1 11H2z" fill="#bdbdbd"/></svg>
<div class="a" style="left:97.5px;top:612.5px;width:768px;height:230px;background:#2b2b2b;"></div>
<div class="a" style="left:97.5px;top:612.5px;width:768px;height:230px;overflow:hidden">
<div class="t" style="left:16.3px;top:31.2px;font-size:16.38px;color:#bbbbbb;font-family:'Liberation Mono',monospace">进度已保存，当前已采集到第 2895 个股票代码</div>
<div class="t" style="left:16.3px;top:109.2px;font-size:16.38px;color:#bbbbbb;font-family:'Liberation Mono',monospace">正在采集第 2897 股票代码: sz300301 --------------------------------</div>
<div class="t" style="left:16.3px;top:185.5px;font-size:16.38px;color:#bbbbbb;font-family:'Liberation Mono',monospace">{&#x27;股票名称&#x27;: &#x27;sz300301&#x27;, &#x27;日期&#x27;: &#x27;2026-02-09&#x27;, &#x27;主力净流入/万/3日&#x27;: 371.99, &#x27;主力净流入</div>
<div class="t" style="left:16.3px;top:211.2px;font-size:16.38px;color:#bbbbbb;font-family:'Liberation Mono',monospace">{&#x27;股票名称&#x27;: &#x27;sz300301&#x27;, &#x27;日期&#x27;: &#x27;2026-02-06&#x27;, &#x27;主力净流入/万/3日&#x27;: 235.58, &#x27;主力净流入</div>
<div class="a" style="left:16.400000000000006px;top:219.0px;width:105.5px;height:10px;background:rgba(90,92,94,0.55);"></div>
<div class="a" style="left:756.9px;top:56.5px;width:10px;height:32.3px;background:#4a4b4d;"></div>
</div>
<svg class="a" style="left:767px;top:619px;" width="34" height="62" viewBox="0 0 34 62"><path d="M6.5 7.9H27.4M17 8V54M6.5 54.4H27.4" fill="none" stroke="#e8e8e8" stroke-width="8" stroke-linecap="round"/><path d="M6.8 7.9H15.6M18.4 7.9H27.2M17 10.5V51.8M6.8 54.4H15.6M18.4 54.4H27.2" fill="none" stroke="#101010" stroke-width="2.6"/></svg>
<div class="a" style="left:865px;top:612.5px;width:1px;height:230px;background:#323232;"></div>
<div class="a" style="left:866px;top:612.5px;width:35px;height:230px;background:#3c3f41;"></div>
<div class="a" style="left:900.5px;top:612.5px;width:1px;height:230px;background:#323232;"></div>
<div class="a" style="left:901.5px;top:612.5px;width:332px;height:230px;background:#2b2b2b;"></div>
<svg class="a" style="left:875px;top:622.5px;" width="18" height="18" viewBox="0 0 18 18"><path d="M15 1H2v15h14V8" fill="none" stroke="#bdbdbd" stroke-width="2"/><path d="M5 8l3.5 3.5L17 2" fill="none" stroke="#bdbdbd" stroke-width="2.2"/></svg>
<svg class="a" style="left:877px;top:654px;" width="12" height="17" viewBox="0 0 12 17"><rect x="0" y="2" width="12" height="2.2" fill="#bdbdbd"/><rect x="3.5" y="0" width="5" height="2" fill="#bdbdbd"/><path d="M1 5.5h10l-1 11H2z" fill="#bdbdbd"/></svg>
<div class="a" style="left:872px;top:683.4000000000001px;width:24px;height:1px;background:#323232;"></div>
<svg class="a" style="left:875px;top:694.5px;" width="18" height="18" viewBox="0 0 18 18"><path d="M17 4.5a5 5 0 0 1-7 4.5L2.5 16.5a1.6 1.6 0 0 1-2-2L8 7a5 5 0 0 1 4.5-7L10 2.5l1 3 3 1z" fill="#bdbdbd"/></svg>
<div class="t" style="left:907px;top:641.0px;font-size:15.5px;color:#bbbbbb;font-weight:normal;font-family:'Liberation Sans',sans-serif;">2026/2/8</div>
<div class="t" style="left:907px;top:667.5px;font-size:15.5px;color:#bbbbbb;font-weight:normal;font-family:'Liberation Sans',sans-serif;">18:29</div>
<div class="t" style="left:966.6px;top:667.5px;font-size:15.5px;color:#bbbbbb;font-weight:normal;font-family:'Liberation Sans',sans-serif;">PyCharm 2020.1.5 available</div>
<div class="t" style="left:966.6px;top:693.5px;font-size:15.5px;color:#8a8a8a;font-weight:normal;font-family:'Liberation Sans',sans-serif;">Update...</div>
<div class="t" style="left:907px;top:745.2px;font-size:15.5px;color:#bbbbbb;font-weight:normal;font-family:'Liberation Sans',sans-serif;">2026/2/9</div>
<div class="t" style="left:907px;top:770.8px;font-size:15.5px;color:#bbbbbb;font-weight:normal;font-family:'Liberation Sans',sans-serif;">18:29</div>
<div class="t" style="left:966.6px;top:770.8px;font-size:15.5px;color:#d0d0d0;font-weight:bold;font-family:'Liberation Sans',sans-serif;">PyCharm 2020.1.5 available</div>
<div class="t" style="left:966.6px;top:796.8px;font-size:15.5px;color:#589df6;font-weight:normal;font-family:'Liberation Sans',sans-serif;text-decoration:underline">Update...</div>
<div class="a" style="left:1222.3px;top:800px;width:11px;height:40px;background:#4a4b4d;"></div>
<div class="a" style="left:1222.3px;top:833px;width:11px;height:2px;background:#4f8a4a;"></div>
<div class="a" style="left:0px;top:842.5px;width:1260px;height:1.5px;background:#323232;"></div>
<div class="a" style="left:0px;top:844px;width:1260px;height:27px;background:#3c3f41;"></div>
<svg class="a" style="left:41px;top:852px;" width="13" height="12" viewBox="0 0 13 12"><path d="M0 1h2M4 1h9M0 6h2M4 6h9M0 11h2M4 11h9" stroke="#b0b0b0" stroke-width="1.8"/></svg>
<div class="t" style="left:60.7px;top:851.8px;font-size:13.6px;color:#bbbbbb;font-weight:normal;font-family:'Liberation Sans',sans-serif;">6: TODO</div>
<div class="a" style="left:61px;top:866.5px;width:7.5px;height:1px;background:#a0a0a0;"></div>
<div class="a" style="left:160.5px;top:866.5px;width:8px;height:1px;background:#b0b0b0;"></div>
<div class="a" style="left:128px;top:844px;width:84.5px;height:27px;background:#313335;"></div>
<svg class="a" style="left:142px;top:852.5px;" width="9" height="12" viewBox="0 0 9 12"><path d="M0 0L9 6L0 12z" fill="#c8c8c8"/></svg>
<div class="t" style="left:160px;top:851.3px;font-size:14.5px;color:#d8d8d8;font-weight:normal;font-family:'Liberation Sans',sans-serif;">4: Run</div>
<svg class="a" style="left:229px;top:851px;" width="15" height="15" viewBox="0 0 15 15"><path d="M7.5 0c-3.5 0-3.5 1.5-3.5 2.5v2h3.5v1H2.5C1 5.5 0 7 0 8.5S1 12 2.5 12h1v-2c0-1.5 1-2.5 2.5-2.5h3.5c1.2 0 2-1 2-2V2.5C11.5 1 10 0 7.5 0z M7.5 15c3.5 0 3.5-1.5 3.5-2.5v-2H7.5v-1h5c1.5 0 2.5-1.5 2.5-3S14 3 12.5 3h-1v2c0 1.5-1 2.5-2.5 2.5H5.5c-1.2 0-2 1-2 2v3c0 1.5 1.5 2.5 4 2.5z" fill="#b0b0b0"/></svg>
<div class="t" style="left:250px;top:851.3px;font-size:14.5px;color:#bbbbbb;font-weight:normal;font-family:'Liberation Sans',sans-serif;">Python Console</div>
<svg class="a" style="left:381px;top:852px;" width="14" height="13" viewBox="0 0 14 13"><rect x="0" y="0" width="14" height="13" fill="#b0b0b0"/><path d="M3 3l3.5 3L3 9M7 10h4" fill="none" stroke="#3c3f41" stroke-width="1.6"/></svg>
<div class="t" style="left:401.4px;top:851.3px;font-size:14.5px;color:#bbbbbb;font-weight:normal;font-family:'Liberation Sans',sans-serif;">Terminal</div>
<div class="a" style="left:1125px;top:844px;width:102px;height:27px;background:#333537;"></div>
<svg class="a" style="left:1136px;top:849.5px;" width="17" height="17" viewBox="0 0 17 17"><circle cx="8.5" cy="8.5" r="8.5" fill="#499c54"/><text x="5.2" y="13" font-family="Liberation Sans" font-size="11" font-weight="bold" fill="#fff">1</text></svg>
<div class="t" style="left:1158px;top:851.3px;font-size:14.5px;color:#d8d8d8;font-weight:normal;font-family:'Liberation Sans',sans-serif;">Event Log</div>
<div class="a" style="left:0px;top:871px;width:1260px;height:1px;background:#323232;"></div>
<div class="a" style="left:0px;top:872px;width:1260px;height:23px;background:#3c3f41;"></div>
<svg class="a" style="left:7px;top:876px;" width="15" height="15" viewBox="0 0 15 15"><rect x="3.5" y="0.75" width="10.75" height="10.75" fill="none" stroke="#a0a0a0" stroke-width="1.4"/><path d="M0.75 3.5v10.75h10.75" fill="none" stroke="#a0a0a0" stroke-width="1.4"/></svg>
<div class="t" style="left:33px;top:875.6px;font-size:15.8px;color:#bbbbbb;font-weight:normal;font-family:'Liberation Sans',sans-serif;">PyCharm 2020.1.5 available: // Update... (today 18:29)</div>
<div class="t" style="left:821.5px;top:876.0px;font-size:15px;color:#bbbbbb;font-weight:normal;font-family:'Liberation Sans',sans-serif;">228:28</div>
<div class="t" style="left:884px;top:876.0px;font-size:15px;color:#bbbbbb;font-weight:normal;font-family:'Liberation Sans',sans-serif;">CRLF</div>
<div class="t" style="left:933px;top:876.0px;font-size:15px;color:#bbbbbb;font-weight:normal;font-family:'Liberation Sans',sans-serif;">UTF-8</div>
<div class="t" style="left:989px;top:876.0px;font-size:15px;color:#bbbbbb;font-weight:normal;font-family:'Liberation Sans',sans-serif;">4 spaces</div>
<div class="t" style="left:1067.3px;top:876.0px;font-size:15px;color:#bbbbbb;font-weight:normal;font-family:'Liberation Sans',sans-serif;">Python 3.9 (data)</div>
<svg class="a" style="left:1201px;top:875px;" width="15" height="16" viewBox="0 0 15 16"><path d="M2 8V5a4 4 0 0 1 8 0" fill="none" stroke="#b0b0b0" stroke-width="2"/><rect x="5" y="8" width="10" height="8" fill="#b0b0b0"/></svg>
<svg class="a" style="left:1231px;top:875px;" width="16" height="16" viewBox="0 0 16 16"><path d="M4 1h8l1 5H3z" fill="#9a9a9a"/><rect x="0" y="6" width="16" height="2" fill="#9a9a9a"/><circle cx="5" cy="11" r="2.5" fill="none" stroke="#9a9a9a" stroke-width="1.5"/><circle cx="11" cy="11" r="2.5" fill="none" stroke="#9a9a9a" stroke-width="1.5"/><path d="M3 14l2 2h6l2-2" fill="none" stroke="#9a9a9a" stroke-width="1.3"/></svg>
</div>
<svg class="a" style="left:1076px;top:1254px" width="130" height="394" viewBox="0 0 130 394"><defs><clipPath id="pc"><rect x="2" y="2" width="126" height="390" rx="63"/></clipPath></defs><g clip-path="url(#pc)"><rect x="0" y="0" width="130" height="394" fill="#000" fill-opacity="0.45"/></g><rect x="4" y="4" width="122" height="386" rx="61" fill="none" stroke="#9c9c9c" stroke-width="4"/><rect x="4" y="142" width="122" height="4" fill="#9c9c9c"/><rect x="4" y="251" width="122" height="4" fill="#9c9c9c"/><path d="M66 67 L80.5 84.5 H51.5 Z" fill="#9a9a9a" stroke="#9a9a9a" stroke-width="2" stroke-linejoin="round"/><path d="M51.5 311.5 H80.5 L66 328.5 Z" fill="#9a9a9a" stroke="#9a9a9a" stroke-width="2" stroke-linejoin="round"/><path d="M48.3 177.6h34M37.5 197.5h55M48.3 218.4h34" stroke="#9a9a9a" stroke-width="5.5" stroke-linecap="round"/></svg>
<div class="a" style="left:1230px;top:1607px;width:50px;height:40px;border-radius:20px;background:#3b7ff2"></div>
<svg class="a" style="left:1240px;top:1618px" width="12" height="18" viewBox="0 0 12 18"><path d="M9 2L3 9l6 7" fill="none" stroke="#fff" stroke-width="2.6" stroke-linecap="round" stroke-linejoin="round"/></svg>
<div class="a" style="left:0px;top:1608px;width:2px;height:38px;background:#2a5aa8;"></div>
<div class="a" style="left:0;top:1875px;width:1260px;height:49px;overflow:hidden;filter:blur(0.3px)"><div class="a" style="left:0;top:-1875px;width:1260px;height:2800px">
<div class="a" style="left:0px;top:1875px;width:1260px;height:49px;background:#070707;"></div>
<svg class="a" style="left:19px;top:1891px;" width="21" height="20" viewBox="0 0 21 20"><path d="M0 2.8L8.6 1.6V9.5H0zM9.8 1.4L21 0V9.5H9.8zM0 10.6h8.6v7.9L0 17.3zM9.8 10.6H21V20L9.8 18.6z" fill="#fff"/></svg>
<svg class="a" style="left:78px;top:1890px;" width="21" height="21" viewBox="0 0 21 21"><circle cx="13" cy="8" r="6.5" fill="none" stroke="#fff" stroke-width="1.8"/><path d="M8.5 12.5L1 20" stroke="#fff" stroke-width="2"/></svg>
<svg class="a" style="left:137.5px;top:1891px;" width="21" height="19" viewBox="0 0 21 19"><rect x="1" y="4" width="13" height="11" fill="none" stroke="#fff" stroke-width="1.8"/><path d="M0 1h15M0 18h15" stroke="#fff" stroke-width="1.8"/><path d="M19 1v3M19 7v11" stroke="#fff" stroke-width="2"/></svg>
<div class="a" style="left:184.5px;top:1891.5px;width:1.2px;height:18px;background:#5a5a5a;"></div>
<div class="a" style="left:188px;top:1891.5px;width:1.2px;height:18px;background:#5a5a5a;"></div>
<svg class="a" style="left:214px;top:1885px;" width="29" height="29" viewBox="0 0 29 29"><path d="M26 15.5H7.5" stroke="#3cb7e8" stroke-width="4.6"/><path d="M26 15.5A9.6 9.6 0 1 0 23.2 22.3" fill="none" stroke="#3cb7e8" stroke-width="5"/><path d="M3 27C0 22 9 9 21 3.5C26.5 1 29 2 27.5 6" fill="none" stroke="#d8c45a" stroke-width="2"/></svg>
<svg class="a" style="left:262.5px;top:1891.5px;" width="31" height="20" viewBox="0 0 31 20"><path d="M2 1.7H18.5L10 18.5Z" fill="none" stroke="#e63a2e" stroke-width="3.4" stroke-linejoin="round"/><path d="M15.5 1.7H29L21.5 18.5Z" fill="none" stroke="#ec4a2c" stroke-width="3.4" stroke-linejoin="round"/></svg>
<svg class="a" style="left:411px;top:1891.5px;" width="31" height="20" viewBox="0 0 31 20"><path d="M2 1.7H18.5L10 18.5Z" fill="none" stroke="#e63a2e" stroke-width="3.4" stroke-linejoin="round"/><path d="M15.5 1.7H29L21.5 18.5Z" fill="none" stroke="#ec4a2c" stroke-width="3.4" stroke-linejoin="round"/></svg>
<svg class="a" style="left:460px;top:1891.5px;" width="31" height="20" viewBox="0 0 31 20"><path d="M2 1.7H18.5L10 18.5Z" fill="none" stroke="#e63a2e" stroke-width="3.4" stroke-linejoin="round"/><path d="M15.5 1.7H29L21.5 18.5Z" fill="none" stroke="#ec4a2c" stroke-width="3.4" stroke-linejoin="round"/></svg>
<svg class="a" style="left:558px;top:1891.5px;" width="31" height="20" viewBox="0 0 31 20"><path d="M2 1.7H18.5L10 18.5Z" fill="none" stroke="#e63a2e" stroke-width="3.4" stroke-linejoin="round"/><path d="M15.5 1.7H29L21.5 18.5Z" fill="none" stroke="#ec4a2c" stroke-width="3.4" stroke-linejoin="round"/></svg>
<svg class="a" style="left:657px;top:1891.5px;" width="31" height="20" viewBox="0 0 31 20"><path d="M2 1.7H18.5L10 18.5Z" fill="none" stroke="#e63a2e" stroke-width="3.4" stroke-linejoin="round"/><path d="M15.5 1.7H29L21.5 18.5Z" fill="none" stroke="#ec4a2c" stroke-width="3.4" stroke-linejoin="round"/></svg>
<svg class="a" style="left:706px;top:1891.5px;" width="31" height="20" viewBox="0 0 31 20"><path d="M2 1.7H18.5L10 18.5Z" fill="none" stroke="#e63a2e" stroke-width="3.4" stroke-linejoin="round"/><path d="M15.5 1.7H29L21.5 18.5Z" fill="none" stroke="#ec4a2c" stroke-width="3.4" stroke-linejoin="round"/></svg>
<svg class="a" style="left:312px;top:1886px;" width="29" height="28" viewBox="0 0 29 28"><defs><linearGradient id="npg" x1="0" y1="1" x2="1" y2="0"><stop offset="0" stop-color="#1f6f86"/><stop offset="0.35" stop-color="#7cc7de"/><stop offset="1" stop-color="#e6f6fb"/></linearGradient></defs><path d="M11 1.3L26 3L27.7 26L1 19.9z" fill="url(#npg)"/><path d="M26 3L27.7 26L19 23z" fill="#d9eef4"/><path d="M11 1.3L26 3" stroke="#f4fbfd" stroke-width="1.5"/></svg>
<svg class="a" style="left:363px;top:1888.5px;" width="26" height="23" viewBox="0 0 26 23"><path d="M0.5 0.5h9l1.5 1.5H25.5V21.7H0.5z" fill="#f6dc86"/><path d="M0.5 3.5H25.5" stroke="#e9c865" stroke-width="1"/><path d="M5.2 22.5V16a3 3 0 0 1 3-3H19a3 3 0 0 1 3 3v6.5H16.8V17.4H10.3V22.5z" fill="#4aaed8"/></svg>
<svg class="a" style="left:509.5px;top:1885.5px;" width="30" height="30" viewBox="0 0 30 30"><rect x="0" y="0" width="30" height="30" rx="6" fill="#fafafa"/><path d="M13 5.5H26L24.8 11H21.5L19.8 20H16.6L18.3 11H12z" fill="#2ec4d8"/><path d="M4.5 9H17.5L16.3 15H13.5L11.5 24.5H8.2L10.2 15H3.5z" fill="#1c6cf2"/></svg>
<div class="a" style="left:599.2px;top:1875px;width:48px;height:49px;background:#1c1c1c;"></div>
<svg class="a" style="left:608px;top:1886px;" width="31" height="29" viewBox="0 0 31 29"><path d="M4 2l14-2 9 4-2 6 5 9-6 9-15 1-8-6 1-12z" fill="#21d789"/><path d="M18 0l9 4-2 6 5 9-6 9-10 1z" fill="#fcf84a"/><path d="M4 2l6-1 8 3-5 4z" fill="#07c3f2"/><rect x="6" y="5" width="19" height="19" fill="#000"/><text x="8" y="16" font-family="Liberation Sans" font-weight="bold" font-size="10" fill="#fff">PC</text><rect x="8" y="19" width="7" height="1.8" fill="#fff"/></svg>
<div class="a" style="left:260px;top:1922.5px;width:26.5px;height:2.5px;background:#8fb1dc;"></div>
<div class="a" style="left:287px;top:1922.5px;width:10.5px;height:2.5px;background:#8fb1dc;"></div>
<div class="a" style="left:309px;top:1922.5px;width:26.5px;height:2.5px;background:#8fb1dc;"></div>
<div class="a" style="left:336px;top:1922.5px;width:10.5px;height:2.5px;background:#8fb1dc;"></div>
<div class="a" style="left:358px;top:1922.5px;width:37.5px;height:2.5px;background:#8fb1dc;"></div>
<div class="a" style="left:407px;top:1922.5px;width:26.5px;height:2.5px;background:#8fb1dc;"></div>
<div class="a" style="left:434px;top:1922.5px;width:10.5px;height:2.5px;background:#8fb1dc;"></div>
<div class="a" style="left:456px;top:1922.5px;width:26.5px;height:2.5px;background:#8fb1dc;"></div>
<div class="a" style="left:483px;top:1922.5px;width:10.5px;height:2.5px;background:#8fb1dc;"></div>
<div class="a" style="left:506px;top:1922.5px;width:37.5px;height:2.5px;background:#8fb1dc;"></div>
<div class="a" style="left:555px;top:1922.5px;width:37.5px;height:2.5px;background:#8fb1dc;"></div>
<div class="a" style="left:599px;top:1922.5px;width:47.5px;height:2.5px;background:#8fb1dc;"></div>
<div class="a" style="left:656px;top:1922.5px;width:34.5px;height:2.5px;background:#8fb1dc;"></div>
<div class="a" style="left:702px;top:1922.5px;width:37.5px;height:2.5px;background:#8fb1dc;"></div>
<div class="a" style="left:764.5px;top:1890.5px;width:1.2px;height:19px;background:#5a5a5a;"></div>
<div class="a" style="left:767.5px;top:1890.5px;width:1.2px;height:19px;background:#5a5a5a;"></div>
<div class="a" style="left:786px;top:1890px;width:18px;height:16.5px;background:#f2f2f2;"></div>
<div class="t" style="left:786.5px;top:1890.5px;font-size:16px;color:#000;font-weight:normal;font-family:'Liberation Sans',sans-serif;">拼</div>
<div class="t" style="left:813px;top:1890.0px;font-size:18px;color:#fff;font-weight:normal;font-family:'Liberation Sans',sans-serif;">中</div>
<svg class="a" style="left:841px;top:1893px;" width="14" height="15" viewBox="0 0 14 15"><path d="M6 1a7 7 0 1 1-5 12A6 6 0 0 0 6 1z" fill="none" stroke="#fff" stroke-width="1.4"/></svg>
<svg class="a" style="left:862px;top:1889px;" width="20" height="22" viewBox="0 0 20 22"><circle cx="4" cy="5" r="2.6" fill="none" stroke="#fff" stroke-width="1.4"/><circle cx="14" cy="13" r="2.8" fill="#fff"/><path d="M16.5 13.5c0 3-1.5 5-4 6.5" fill="none" stroke="#fff" stroke-width="2"/></svg>
<div class="t" style="left:885.5px;top:1889.5px;font-size:18px;color:#fff;font-weight:normal;font-family:'Liberation Sans',sans-serif;">简</div>
<svg class="a" style="left:911.5px;top:1889.5px;" width="18" height="18" viewBox="0 0 18 18"><circle cx="9" cy="9" r="5.5" fill="none" stroke="#fff" stroke-width="1.5"/><circle cx="9" cy="9" r="2.2" fill="none" stroke="#fff" stroke-width="1.3"/><path d="M9 0.5v3M9 14.5v3M0.5 9h3M14.5 9h3M3 3l2 2M13 13l2 2M3 15l2-2M13 5l2-2" stroke="#fff" stroke-width="2.2"/></svg>
<svg class="a" style="left:965px;top:1896px;" width="15" height="9" viewBox="0 0 15 9"><path d="M1 8l6.5-6.5L14 8" fill="none" stroke="#fff" stroke-width="1.6"/></svg>
<svg class="a" style="left:992px;top:1893px;" width="20" height="16" viewBox="0 0 20 16"><path d="M1 5h3l5-4v14l-5-4H1z" fill="none" stroke="#fff" stroke-width="1.4"/><path d="M12 5a4 4 0 0 1 0 6M14.5 3a7 7 0 0 1 0 10M17 1a10 10 0 0 1 0 14" fill="none" stroke="#fff" stroke-width="1.4"/></svg>
<svg class="a" style="left:1021px;top:1890.5px;" width="21" height="19" viewBox="0 0 21 19"><rect x="1" y="1" width="17" height="15" fill="none" stroke="#fff" stroke-width="1.6"/><path d="M6 12a4 4 0 0 1 6-5M5 9l3-3" fill="none" stroke="#fff" stroke-width="1.5"/><circle cx="15" cy="14" r="5" fill="#e02020"/><path d="M15 11v3.5M15 16v1" stroke="#fff" stroke-width="1.4"/></svg>
<svg class="a" style="left:1051px;top:1893px;" width="21" height="17" viewBox="0 0 21 17"><path d="M0 0h6l3.5 7 2-4-1.5-3H21l-6.5 13h-3l-1.5-3-1.5 3h-3z" fill="#e8302c"/><circle cx="15" cy="12" r="4" fill="#2c8ee8"/><circle cx="11" cy="13.5" r="3" fill="#2c8ee8"/><circle cx="18" cy="13.5" r="3" fill="#5ab0f0"/></svg>
<svg class="a" style="left:1080.5px;top:1892.5px;" width="20" height="17" viewBox="0 0 20 17"><rect x="6" y="2" width="13" height="10" fill="none" stroke="#fff" stroke-width="1.5"/><path d="M12.5 12v3M8 16h9" stroke="#fff" stroke-width="1.5"/><rect x="0.5" y="0.5" width="5" height="4" fill="none" stroke="#fff" stroke-width="1.2"/><path d="M3 4.5v6h3" fill="none" stroke="#fff" stroke-width="1.2"/></svg>
<div class="t" style="left:1130.5px;top:1881.5px;font-size:15px;color:#fff;font-weight:normal;font-family:'Liberation Sans',sans-serif;">21:55</div>
<div class="t" style="left:1117px;top:1903.0px;font-size:16px;color:#fff;font-weight:normal;font-family:'Liberation Sans',sans-serif;">2026/2/9</div>
<svg class="a" style="left:1209px;top:1890px;" width="31" height="24" viewBox="0 0 31 24"><path d="M1 1h19v14H9l-4 4v-4H1z" fill="#fff"/><path d="M4 5h13M4 8.5h13M4 12h9" stroke="#070707" stroke-width="1.6"/><circle cx="22.5" cy="15.5" r="8" fill="#2a2a2a" stroke="#fff" stroke-width="1.6"/><text x="19" y="20" font-family="Liberation Sans" font-weight="bold" font-size="12" fill="#fff">1</text></svg>
<div class="a" style="left:1254.5px;top:1876px;width:1px;height:45px;background:#3a3a3a;"></div>
</div></div>
<svg class="a" style="left:32px;top:2627.5px;" width="150" height="107" viewBox="0 0 150 107"><path d="M53.65 1H139.4a9.3 9.3 0 0 1 9.3 9.3V96.6a9.3 9.3 0 0 1-9.3 9.3H53.65A52.45 52.45 0 0 1 53.65 1z" fill="#000" stroke="#6a6a6a" stroke-width="1.6"/><rect x="54.8" y="20.1" width="55.9" height="67.1" rx="27.95" fill="#fff"/><path d="M81.2 29V50.8H63.7A18.5 22 0 0 1 81.2 29z" fill="#000" stroke="#000" stroke-width="3" stroke-linejoin="round"/></svg>
<svg class="a" style="left:356.5px;top:2545px;" width="150" height="107" viewBox="0 0 150 107"><path d="M96.15 1.3H10.7a9.3 9.3 0 0 0-9.3 9.3V96.5a9.3 9.3 0 0 0 9.3 9.3H96.15A52.25 52.25 0 0 0 96.15 1.3z" fill="#000" stroke="#6a6a6a" stroke-width="1.6"/><rect x="43.8" y="20" width="55.4" height="67.8" rx="27.7" fill="#fff"/><path d="M72.7 28.7V50.3H90.2A17.5 21.6 0 0 0 72.7 28.7z" fill="#000" stroke="#000" stroke-width="3" stroke-linejoin="round"/></svg>
<div class="a" style="left:880px;top:2548px;width:324px;height:139px;background:#232325;border-radius:69.5px"></div>
<div class="a" style="left:1041.5px;top:2548px;width:1.2px;height:139px;background:#4a4a4c;"></div>
<svg class="a" style="left:955px;top:2592px;" width="32" height="52" viewBox="0 0 32 52"><path d="M26.5 5.5L6 25.7 26.5 46.2" fill="none" stroke="#fff" stroke-width="4.2" stroke-linecap="round" stroke-linejoin="round"/></svg>
<svg class="a" style="left:1074px;top:2591.5px;" width="78" height="52" viewBox="0 0 78 52"><rect x="4.4" y="4.3" width="68.8" height="43.5" rx="4" fill="none" stroke="#fff" stroke-width="4"/><path d="M17.5 19.5h7.5M33 19.5h7.4M50 19.5h9.4M17.5 33.5h41.9" stroke="#fff" stroke-width="4" stroke-linecap="round"/></svg>
</body></html>
